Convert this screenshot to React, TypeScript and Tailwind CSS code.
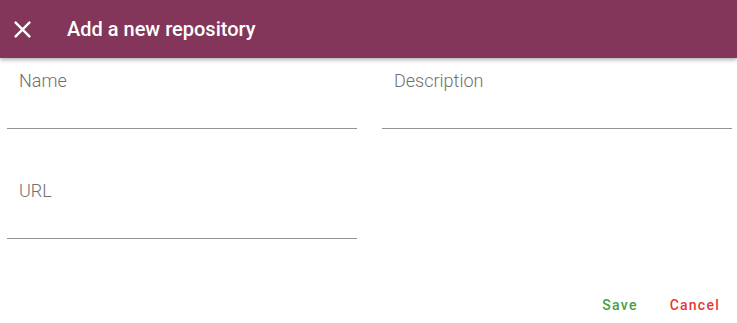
// Dialog: "Add a new repository" — app bar + two-column form + text buttons

function Field({ label }: { label: string }) {
  return (
    <div className="h-[71px] pt-[11px] pl-[12px] border-b border-[#949494]">
      <span className="text-[18px] leading-[24px] font-light text-[#6f6f6f]">{label}</span>
    </div>
  )
}

export default function App() {
  return (
    <div className="w-[737px] h-[323px] bg-white overflow-hidden" style={{ fontFamily: 'Roboto, "Liberation Sans", sans-serif' }}>
      <header className="relative z-10 h-[58px] bg-[#833659] flex items-center shadow-[0_2px_4px_rgba(0,0,0,0.3)]">
        <button className="ml-[8px] w-[29px] h-[29px] flex items-center justify-center text-white">
          <svg className="w-[29px] h-[29px]" viewBox="0 0 24 24" fill="currentColor" aria-hidden="true">
            <path d="M19 6.41L17.59 5 12 10.59 6.41 5 5 6.41 10.59 12 5 17.59 6.41 19 12 13.41 17.59 19 19 17.59 13.41 12z" />
          </svg>
        </button>
        <h1 className="ml-[30px] text-[20px] font-medium text-white leading-none">Add a new repository</h1>
      </header>

      <div className="pl-[7px] pr-[5px]">
        <div className="grid grid-cols-2 gap-x-[25px] gap-y-[39px]">
          <Field label="Name" />
          <Field label="Description" />
          <Field label="URL" />
        </div>
        <div className="mt-[56px] flex justify-end gap-[32px] pr-[12px]">
          <button className="text-[14px] leading-[20px] font-medium tracking-[1.25px] text-[#43a047]">Save</button>
          <button className="text-[14px] leading-[20px] font-medium tracking-[1.25px] text-[#e53935]">Cancel</button>
        </div>
      </div>
    </div>
  )
}
